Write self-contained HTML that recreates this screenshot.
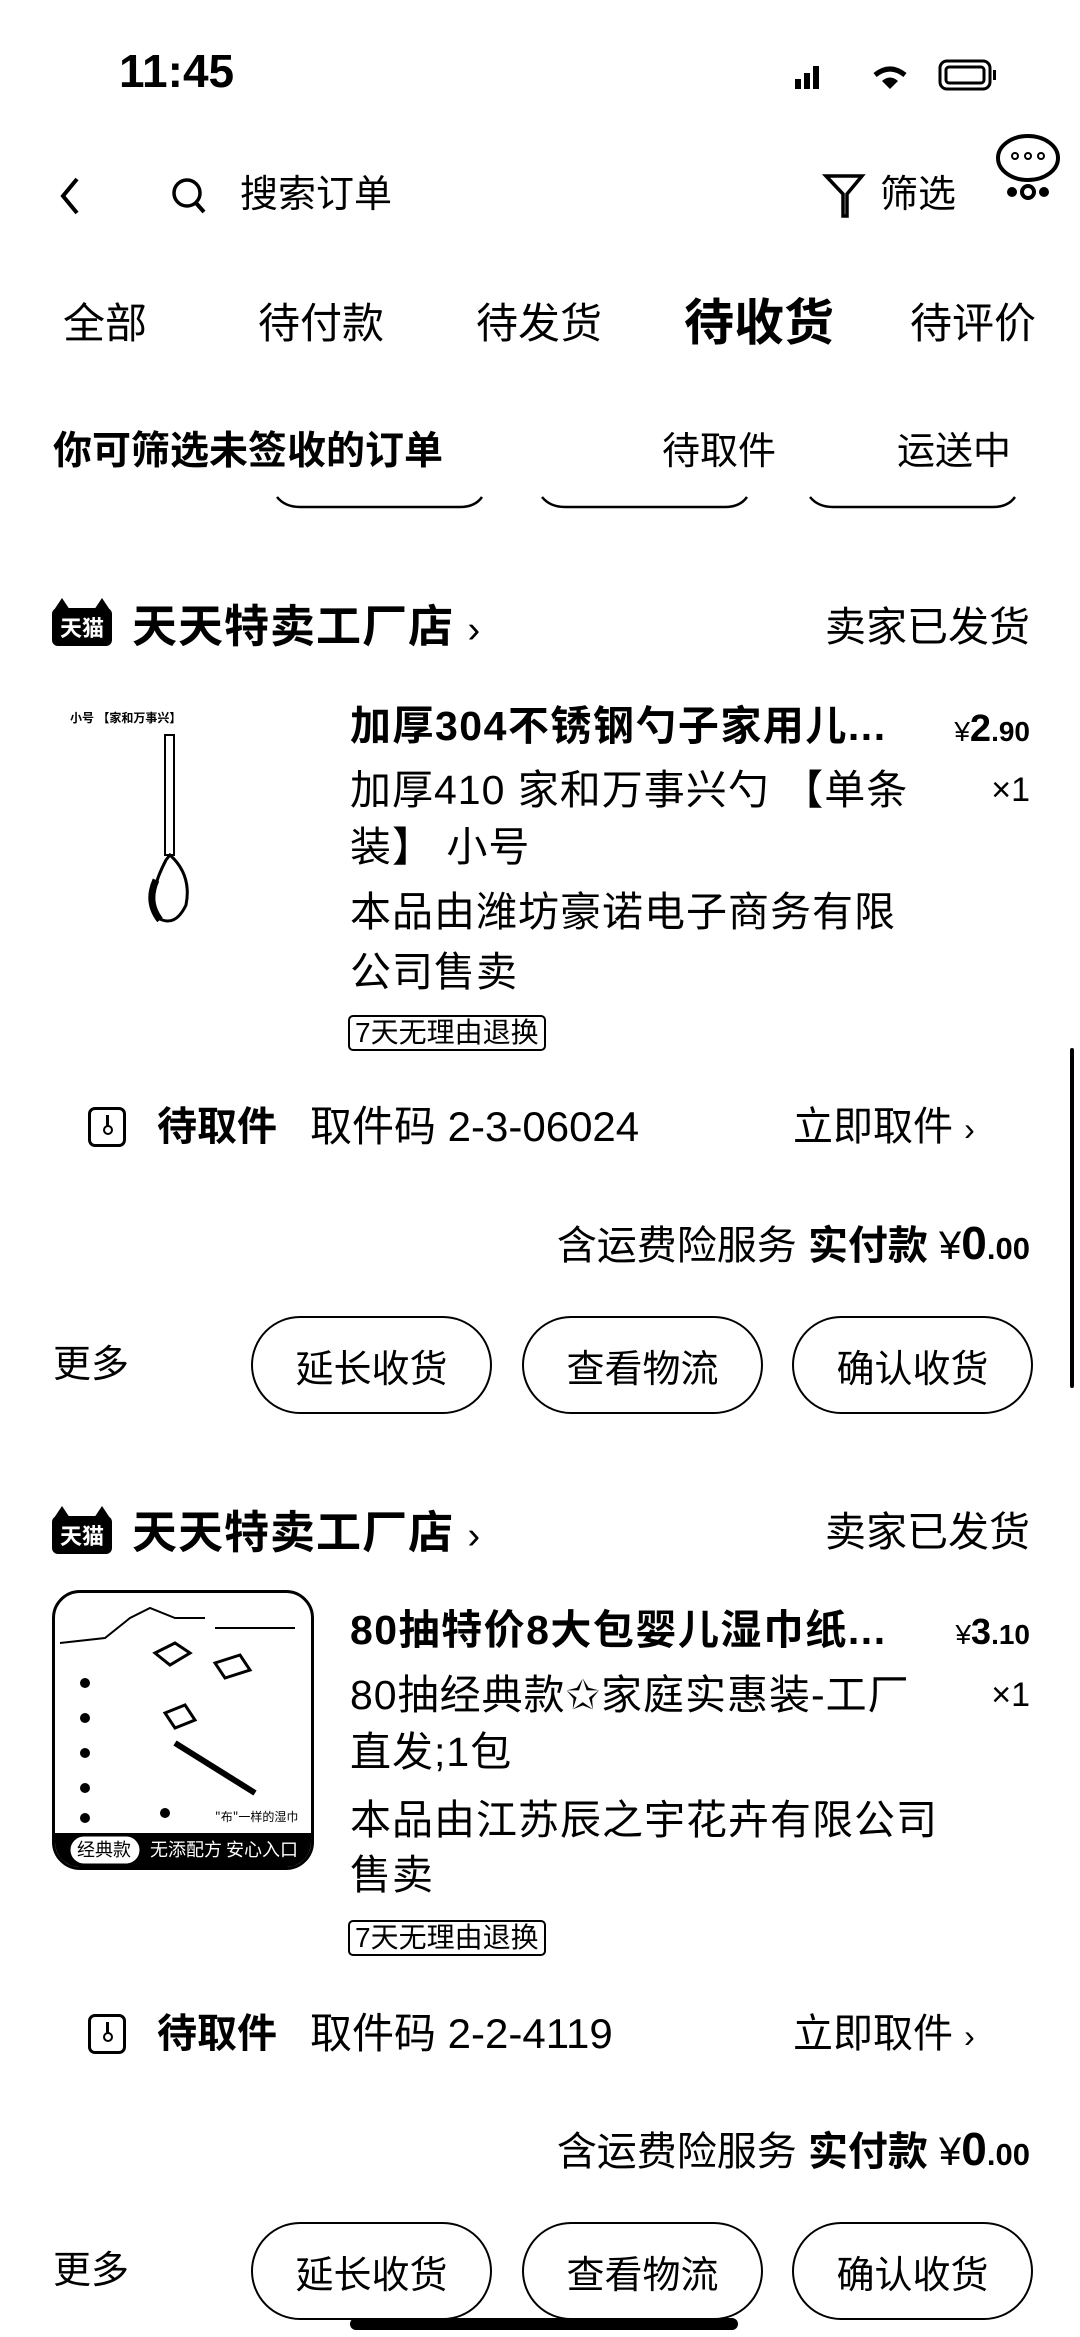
<!DOCTYPE html>
<html><head><meta charset="utf-8"><style>
*{margin:0;padding:0;box-sizing:border-box}
body{width:1080px;height:2337px;background:#fff;position:relative;overflow:hidden;font-family:"Liberation Sans","Noto Sans CJK SC",sans-serif;color:#000}
.a{position:absolute;white-space:nowrap;line-height:1}
.b{font-weight:bold}
.r{text-align:right}
.btn{position:absolute;width:241px;height:98px;border:2px solid #000;border-radius:49px;font-size:38px;display:flex;align-items:center;justify-content:center}
.tag{position:absolute;border:2px solid #000;border-radius:5px;font-size:28px;padding:2px 5px;line-height:1}
.tm{position:absolute;width:60px;height:38px;background:#000;border-radius:6px;color:#fff;font-size:22px;font-weight:bold;display:flex;align-items:center;justify-content:center}
.tm:before,.tm:after{content:"";position:absolute;top:-10px;width:0;height:0;border-left:8px solid transparent;border-right:8px solid transparent;border-bottom:12px solid #000}
.tm:before{left:2px}.tm:after{right:2px}
.pk{position:absolute;width:38px;height:40px;border:3px solid #000;border-radius:7px}
.pk i{position:absolute;left:12px;top:15px;width:10px;height:10px;border:2px solid #000;border-radius:50%}
.pk b{position:absolute;left:15px;top:5px;width:3px;height:11px;background:#000}
.t{font-size:40px}
.tt{font-size:41px;letter-spacing:1px}
.ti{font-size:41px;letter-spacing:1.5px}
</style></head><body>
<div class="a b" style="left:119px;top:48px;font-size:46px">11:45</div>
<svg class="a" style="left:790px;top:55px" width="230" height="40" viewBox="0 0 230 40">
<rect x="5" y="24" width="6" height="10" fill="#000"/><rect x="14" y="18" width="6" height="16" fill="#000"/><rect x="23" y="11" width="6" height="23" fill="#000"/>
<path d="M85 20 Q100 8 115 20" stroke="#000" stroke-width="5" fill="none"/><path d="M92 26 L100 34 L108 26 Q100 19 92 26Z" fill="#000"/>
<rect x="150" y="6" width="50" height="28" rx="7" stroke="#000" stroke-width="3" fill="none"/><rect x="156" y="12" width="38" height="16" rx="3" stroke="#000" stroke-width="3" fill="none"/><rect x="203" y="15" width="3" height="10" fill="#000"/>
</svg>
<svg class="a" style="left:55px;top:175px" width="30" height="42"><path d="M22 4 L8 21 L22 38" stroke="#000" stroke-width="4" fill="none"/></svg>
<svg class="a" style="left:170px;top:175px" width="40" height="42"><circle cx="17" cy="18" r="13" stroke="#000" stroke-width="3.5" fill="none"/><path d="M26 28 L34 37" stroke="#000" stroke-width="4"/></svg>
<div class="a" style="left:240px;top:176px;font-size:38px">搜索订单</div>
<svg class="a" style="left:822px;top:170px" width="46" height="52"><path d="M4 6 H40 L25 24 V46 H21 V24 Z" stroke="#000" stroke-width="3.5" fill="none"/></svg>
<div class="a" style="left:880px;top:176px;font-size:38px">筛选</div>
<svg class="a" style="left:990px;top:130px" width="80" height="80"><ellipse cx="38" cy="28" rx="30" ry="22" stroke="#000" stroke-width="4" fill="none"/><circle cx="25" cy="26" r="3" stroke="#000" stroke-width="2" fill="none"/><circle cx="38" cy="26" r="3" stroke="#000" stroke-width="2" fill="none"/><circle cx="51" cy="26" r="3" stroke="#000" stroke-width="2" fill="none"/><circle cx="22" cy="62" r="5" fill="#000"/><circle cx="38" cy="62" r="6" stroke="#000" stroke-width="4" fill="none"/><circle cx="54" cy="62" r="5" fill="#000"/></svg>
<div class="a" style="left:63px;top:303px;font-size:42px">全部</div>
<div class="a" style="left:258px;top:303px;font-size:42px">待付款</div>
<div class="a" style="left:476px;top:303px;font-size:42px">待发货</div>
<div class="a b" style="left:684px;top:298px;font-size:50px">待收货</div>
<div class="a" style="left:910px;top:303px;font-size:42px">待评价</div>
<div class="a b" style="left:53px;top:432px;font-size:39px">你可筛选未签收的订单</div>
<div class="a" style="left:662px;top:433px;font-size:38px">待取件</div>
<div class="a" style="left:897px;top:433px;font-size:38px">运送中</div>
<svg class="a" style="left:270px;top:495px" width="760" height="20"><path d="M7 2 Q15 12 30 12 H190 Q205 12 212 2 M272 2 Q280 12 295 12 H455 Q470 12 477 2 M540 2 Q548 12 563 12 H723 Q738 12 745 2" stroke="#000" stroke-width="2.5" fill="none"/></svg>

<!-- order 1 -->
<div class="tm" style="left:52px;top:608px">天猫</div>
<div class="a b" style="left:132px;top:604px;font-size:45px;letter-spacing:1px">天天特卖工厂店 <span style="font-weight:normal;font-size:38px">›</span></div>
<div class="a r" style="right:50px;top:607px;font-size:41px">卖家已发货</div>
<div class="a" style="left:70px;top:712px;font-size:12px;font-weight:bold">小号 【家和万事兴】</div>
<svg class="a" style="left:130px;top:730px" width="120" height="200"><rect x="35" y="5" width="9" height="120" stroke="#000" stroke-width="2" fill="none"/><path d="M40 125 Q62 145 56 175 Q45 198 28 188 Q16 168 36 130Z" stroke="#000" stroke-width="3" fill="none"/><path d="M26 150 Q16 172 30 190" stroke="#000" stroke-width="7" fill="none"/></svg>
<div class="a b ti" style="left:350px;top:706px">加厚304不锈钢勺子家用儿...</div>
<div class="a r" style="right:50px;top:710px;font-size:28px">¥<b style="font-size:38px">2</b><b style="font-size:28px">.90</b></div>
<div class="a tt" style="left:350px;top:770px">加厚410 家和万事兴勺 【单条</div>
<div class="a tt" style="left:350px;top:827px">装】 小号</div>
<div class="a r" style="right:50px;top:773px;font-size:34px">×1</div>
<div class="a tt" style="left:350px;top:892px">本品由潍坊豪诺电子商务有限</div>
<div class="a tt" style="left:350px;top:952px">公司售卖</div>
<div class="tag" style="left:348px;top:1015px">7天无理由退换</div>
<div class="pk" style="left:88px;top:1107px"><b></b><i></i></div>
<div class="a b t" style="left:157px;top:1107px">待取件</div>
<div class="a" style="left:310px;top:1106px;font-size:42px">取件码 2-3-06024</div>
<div class="a t" style="left:793px;top:1107px">立即取件 <span style="font-size:32px">›</span></div>
<div class="a r" style="right:50px;top:1220px;font-size:40px">含运费险服务 <b>实付款</b> ¥<b style="font-size:46px">0</b><b style="font-size:31px">.00</b></div>
<div class="a" style="left:53px;top:1346px;font-size:38px">更多</div>
<div class="btn" style="left:251px;top:1316px">延长收货</div>
<div class="btn" style="left:522px;top:1316px">查看物流</div>
<div class="btn" style="left:792px;top:1316px">确认收货</div>
<div class="a" style="left:1070px;top:1048px;width:4px;height:340px;background:#000;border-radius:2px"></div>

<!-- order 2 -->
<div class="tm" style="left:52px;top:1516px">天猫</div>
<div class="a b" style="left:132px;top:1510px;font-size:45px;letter-spacing:1px">天天特卖工厂店 <span style="font-weight:normal;font-size:38px">›</span></div>
<div class="a r" style="right:50px;top:1512px;font-size:41px">卖家已发货</div>
<div class="a" style="left:52px;top:1590px;width:262px;height:280px;border:3px solid #000;border-radius:28px;overflow:hidden">
<svg width="262" height="280"><path d="M5 50 L50 45 L75 25 L95 15 L120 25 L150 25 M160 35 H240" stroke="#000" stroke-width="2" fill="none"/><g fill="#000"><circle cx="30" cy="90" r="5"/><circle cx="30" cy="125" r="5"/><circle cx="30" cy="160" r="5"/><circle cx="30" cy="195" r="5"/><circle cx="30" cy="225" r="5"/><circle cx="110" cy="220" r="5"/></g><path d="M120 150 L200 200" stroke="#000" stroke-width="6"/><path d="M100 60 l20 -10 l15 10 l-20 12z M160 70 l25 -8 l10 15 l-25 8z M110 120 l20 -8 l10 15 l-20 8z" stroke="#000" stroke-width="3" fill="none"/><text x="160" y="228" font-size="12" font-family="Noto Sans CJK SC">"布"一样的湿巾</text><rect x="-5" y="240" width="272" height="50" fill="#000"/><rect x="15" y="243" width="70" height="28" rx="14" fill="#fff" stroke="#000"/><text x="22" y="263" font-size="18" font-family="Noto Sans CJK SC">经典款</text><text x="95" y="263" font-size="18" fill="#fff" font-family="Noto Sans CJK SC">无添配方 安心入口</text></svg></div>
<div class="a b ti" style="left:350px;top:1610px">80抽特价8大包婴儿湿巾纸...</div>
<div class="a r" style="right:50px;top:1614px;font-size:28px">¥<b style="font-size:36px">3</b><b style="font-size:28px">.10</b></div>
<div class="a tt" style="left:350px;top:1675px">80抽经典款✩家庭实惠装-工厂</div>
<div class="a tt" style="left:350px;top:1732px">直发;1包</div>
<div class="a r" style="right:50px;top:1678px;font-size:34px">×1</div>
<div class="a tt" style="left:350px;top:1800px">本品由江苏辰之宇花卉有限公司</div>
<div class="a tt" style="left:350px;top:1855px">售卖</div>
<div class="tag" style="left:348px;top:1920px">7天无理由退换</div>
<div class="pk" style="left:88px;top:2014px"><b></b><i></i></div>
<div class="a b t" style="left:157px;top:2014px">待取件</div>
<div class="a" style="left:310px;top:2013px;font-size:42px">取件码 2-2-4119</div>
<div class="a t" style="left:793px;top:2014px">立即取件 <span style="font-size:32px">›</span></div>
<div class="a r" style="right:50px;top:2126px;font-size:40px">含运费险服务 <b>实付款</b> ¥<b style="font-size:46px">0</b><b style="font-size:31px">.00</b></div>
<div class="a" style="left:53px;top:2252px;font-size:38px">更多</div>
<div class="btn" style="left:251px;top:2222px">延长收货</div>
<div class="btn" style="left:522px;top:2222px">查看物流</div>
<div class="btn" style="left:792px;top:2222px">确认收货</div>
<div class="a" style="left:350px;top:2318px;width:388px;height:12px;background:#000;border-radius:6px"></div>
</body></html>
